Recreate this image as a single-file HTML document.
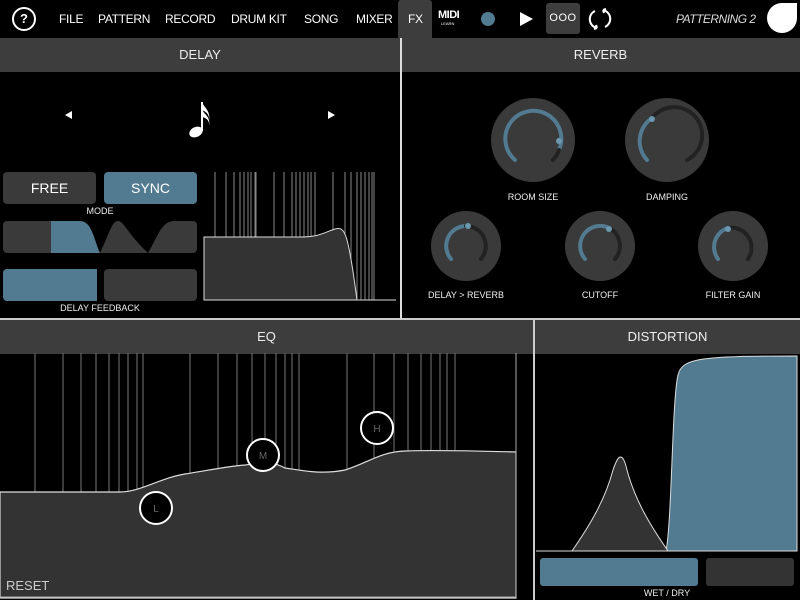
<!DOCTYPE html>
<html><head><meta charset="utf-8"><style>
*{margin:0;padding:0;box-sizing:border-box}
body{width:800px;height:600px;background:#000;overflow:hidden;position:relative;font-family:"Liberation Sans",sans-serif;color:#fff}
.a{position:absolute}
.nav{top:0;height:38px;font-size:12px;line-height:38px;color:#fff;letter-spacing:-0.3px}
.hdr{background:#3d3d3d;height:34px;line-height:34px;text-align:center;font-size:13px;color:#eee}
.btn{border-radius:4px;background:#3a3a3a}
.blue{background:#527a90}
.lbl{font-size:9px;color:#eee;text-align:center}
</style></head><body>
<div class="a" style="left:12px;top:7px;width:24px;height:24px;border:2px solid #fff;border-radius:50%;text-align:center;font-size:13px;font-weight:bold;line-height:20px">?</div>
<div class="a nav" style="left:59px">FILE</div>
<div class="a nav" style="left:98px">PATTERN</div>
<div class="a nav" style="left:165px">RECORD</div>
<div class="a nav" style="left:231px">DRUM KIT</div>
<div class="a nav" style="left:304px">SONG</div>
<div class="a nav" style="left:356px">MIXER</div>
<div class="a" style="left:398px;top:0;width:34px;height:38px;background:#3d3d3d;border-radius:3px 3px 0 0"></div>
<div class="a nav" style="left:408px">FX</div>
<div class="a" style="left:438px;top:9px;font-size:11px;font-weight:bold;line-height:12px;letter-spacing:-0.5px">MIDI</div>
<div class="a" style="left:441px;top:21px;font-size:4px;line-height:5px">LEARN</div>
<div class="a" style="left:481px;top:12px;width:14px;height:14px;border-radius:50%;background:#527a90"></div>
<svg class="a" style="left:518px;top:11px" width="16" height="16"><polygon points="2,1 15,8 2,15" fill="#fff"/></svg>
<div class="a" style="left:546px;top:3px;width:34px;height:31px;background:#3d3d3d;border-radius:3px;font-size:11px;text-align:center;line-height:31px;letter-spacing:0.5px">OOO</div>
<svg class="a" style="left:588px;top:7px" width="24" height="24" fill="none" stroke="#fff" stroke-width="2"><path d="M7 4 A9 9 0 0 0 9 21"/><path d="M17 20 A9 9 0 0 0 15 3"/><path d="M9 21 l-3 1 M9 21 l-1 -3 M15 3 l3 -1 M15 3 l1 3"/></svg>
<div class="a nav" style="left:676px;font-style:italic;font-size:12px;color:#ddd;letter-spacing:-0.5px">PATTERNING 2</div>
<div class="a" style="left:767px;top:3px;width:30px;height:30px;background:#fff;border-radius:50% 0 50% 50%"></div>

<div class="a hdr" style="left:0;top:38px;width:400px">DELAY</div>
<div class="a hdr" style="left:401px;top:38px;width:399px">REVERB</div>
<div class="a" style="left:400px;top:38px;width:2px;height:281px;background:#ddd"></div>
<div class="a" style="left:0;top:318px;width:800px;height:2px;background:#ccc"></div>
<div class="a hdr" style="left:0;top:320px;width:533px">EQ</div>
<div class="a hdr" style="left:535px;top:320px;width:265px">DISTORTION</div>
<div class="a" style="left:533px;top:320px;width:2px;height:280px;background:#ccc"></div>

<svg class="a" style="left:64px;top:110px" width="10" height="10"><polygon points="1,5 8,1 8,9" fill="#fff"/></svg>
<svg class="a" style="left:326px;top:110px" width="10" height="10"><polygon points="9,5 2,1 2,9" fill="#fff"/></svg>
<svg class="a" style="left:186px;top:98px" width="32" height="42">
<ellipse cx="10" cy="34" rx="7" ry="5" transform="rotate(-25 10 34)" fill="#fff"/>
<path d="M16 33 V4" stroke="#fff" stroke-width="2"/>
<path d="M16 4 C18 10 25 12 23 24 C24 16 20 14 16 12Z M16 11 C18 17 25 18 23 29 C24 22 20 20 16 19Z" fill="#fff"/>
</svg>
<div class="a btn" style="left:3px;top:172px;width:93px;height:32px;font-size:14px;text-align:center;line-height:32px">FREE</div>
<div class="a btn blue" style="left:104px;top:172px;width:93px;height:32px;font-size:14px;text-align:center;line-height:32px">SYNC</div>
<div class="a lbl" style="left:3px;top:206px;width:194px">MODE</div>
<div class="a lbl" style="left:3px;top:303px;width:194px">DELAY FEEDBACK</div>
<div class="a btn blue" style="left:3px;top:269px;width:94px;height:32px;border-radius:4px 0 0 4px"></div>
<div class="a btn" style="left:104px;top:269px;width:93px;height:32px"></div>

<svg class="a" style="left:0;top:0" width="800" height="600">
<defs><clipPath id="c1"><rect x="3" y="221" width="194" height="32" rx="4"/></clipPath></defs>
<g clip-path="url(#c1)">
<rect x="3" y="221" width="48" height="32" fill="#3a3a3a"/>
<path d="M51 221 H80 C92 221 94 240 100 253 H51Z" fill="#527a90"/>
<path d="M100 253 C110 232 112 221 118 221 C124 221 126 232 148 253 C160 232 162 221 175 221 H197 V253Z" fill="#3a3a3a"/>
</g>
<g stroke="#888" stroke-width="1">
<path d="M215 172V237M226 172V237M234 172V237M240 172V237M244 172V237M248 172V237M251 172V237M255 172V237M256 172V237M274 172V237M284 172V237M292 172V237M296 172V237M300 172V237M304 172V237M308 172V237M311 172V237M315 172V237M333 172V232M345 172V300M351 172V300M357 172V300M361 172V300M365 172V300M369 172V300M372 172V300M374 172V300"/>
</g>
<path d="M204 300 V237 H300 C320 237 325 232 335 229 C345 226 348 232 357 300Z" fill="#333" stroke="#ddd" stroke-width="1"/>
<path d="M204 300H396" stroke="#ddd"/>

<g fill="none" stroke-width="4" stroke-linecap="round">
<circle cx="533" cy="140" r="42" fill="#3a3a3a" stroke="none"/>
<path d="M515 160 A28 28 0 1 1 559 150" stroke="#527a90"/><path d="M559 150 A28 28 0 0 1 553 160" stroke="#222"/><circle cx="559" cy="141" r="3" fill="#6a98b0" stroke="none"/>
<circle cx="667" cy="140" r="42" fill="#3a3a3a" stroke="none"/>
<path d="M647 160 A28 28 0 0 1 652 118" stroke="#527a90"/><path d="M652 118 A28 28 0 1 1 687 160" stroke="#222"/><circle cx="652" cy="119" r="3" fill="#6a98b0" stroke="none"/>
<circle cx="466" cy="246" r="35" fill="#3a3a3a" stroke="none"/>
<path d="M451 259 A20 20 0 0 1 466 226" stroke="#527a90"/><path d="M466 226 A20 20 0 0 1 481 259" stroke="#222"/><circle cx="468" cy="226" r="3" fill="#6a98b0" stroke="none"/>
<circle cx="600" cy="246" r="35" fill="#3a3a3a" stroke="none"/>
<path d="M585 259 A20 20 0 0 1 609 228" stroke="#527a90"/><path d="M609 228 A20 20 0 0 1 615 259" stroke="#222"/><circle cx="609" cy="229" r="3" fill="#6a98b0" stroke="none"/>
<circle cx="733" cy="246" r="35" fill="#3a3a3a" stroke="none"/>
<path d="M718 259 A20 20 0 0 1 728 228" stroke="#527a90"/><path d="M728 228 A20 20 0 0 1 748 259" stroke="#222"/><circle cx="728" cy="229" r="3" fill="#6a98b0" stroke="none"/>
</g>
<g font-size="9" fill="#eee" text-anchor="middle" font-family="Liberation Sans,sans-serif">
<text x="533" y="200">ROOM SIZE</text><text x="667" y="200">DAMPING</text>
<text x="466" y="298">DELAY &gt; REVERB</text><text x="600" y="298">CUTOFF</text><text x="733" y="298">FILTER GAIN</text>
<text x="667" y="596">WET / DRY</text>
</g>

<g stroke="#777" stroke-width="1">
<path d="M35 353V495M63 353V495M81 353V495M96 353V495M109 353V495M119 353V495M128 353V495M137 353V495M143 353V495M190 353V475M218 353V470M237 353V470M252 353V465M265 353V460M276 353V465M285 353V470M292 353V470M299 353V470M347 353V470M374 353V460M394 353V455M408 353V452M421 353V452M431 353V452M440 353V452M447 353V452M455 353V452"/>
</g>
<path d="M0 598V492H120C140 492 160 478 185 474C210 470 230 466 245 465C260 463 270 460 285 468C300 470 320 475 345 470C370 462 380 452 405 451C430 450 480 451 516 452V598Z" fill="#333" stroke="#ddd" stroke-width="1.2"/>
<g fill="#000" stroke="#fff" stroke-width="2"><circle cx="156" cy="508" r="16"/><circle cx="263" cy="455" r="16"/><circle cx="377" cy="428" r="16"/></g>
<g font-size="10" fill="#666" text-anchor="middle" font-family="Liberation Sans,sans-serif"><text x="156" y="512">L</text><text x="263" y="459">M</text><text x="377" y="432">H</text></g>
<text x="6" y="590" font-size="13" fill="#ccc" font-family="Liberation Sans,sans-serif">RESET</text>
<path d="M0 597H516V353" stroke="#aaa" fill="none"/>

<path d="M666 551 C672 520 672 400 678 375 C682 358 700 356 797 356 V551Z" fill="#527a90" stroke="#ddd" stroke-width="1"/>
<path d="M572 551 C590 525 605 500 613 470 C617 458 622 448 627 470 C635 500 650 525 668 551Z" fill="#333" stroke="#ddd" stroke-width="1"/>
<path d="M536 551H797" stroke="#ddd"/>
<rect x="540" y="558" width="158" height="28" rx="3" fill="#527a90"/>
<rect x="706" y="558" width="88" height="28" rx="3" fill="#333"/>
</svg>
</body></html>
